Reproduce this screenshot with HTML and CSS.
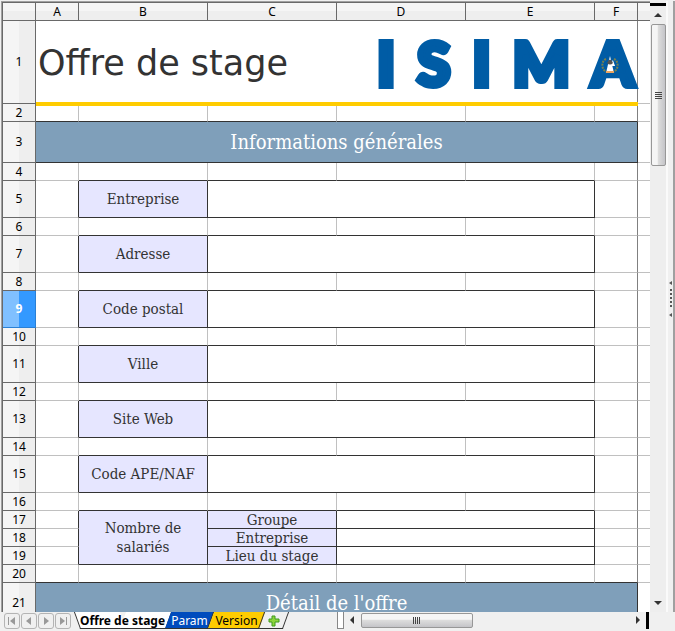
FILE: index.html
```html
<!DOCTYPE html>
<html lang="fr">
<head>
  <meta charset="UTF-8">
  <title>Offre de stage</title>
  <link rel="stylesheet" href="styles.css">
</head>
<body>

  <div class="workspace">
    <main class="sheet">
      <table>
        <colgroup>
          <col class="col-head">
          <col class="col-small">
          <col><col><col><col>
          <col class="col-small">
          <col class="col-rest">
        </colgroup>
        <thead>
          <tr>
            <th></th><th>A</th><th>B</th><th>C</th><th>D</th><th>E</th><th>F</th><th class="rest"></th>
          </tr>
        </thead>
        <tbody>
          <tr class="banner">
            <th>1</th>
            <td colspan="6" class="last">
              <div class="banner-content">
                <h1>Offre de stage</h1>
                <div class="logo">
                  <span>I</span><span>S</span><span>I</span><span>M</span><span>A</span>
                  <svg class="emblem" width="18" height="20" viewBox="0 0 18 20">
                    <path d="M9 1 L13 18 H5 Z" fill="#fff"/>
                    <path d="M5 4 C0 6 0 15 6 17 M13 4 C18 6 18 15 12 17" fill="none" stroke="#77804f" stroke-width="2" stroke-dasharray="2 1"/>
                    <path d="M6 8 Q9 1 12 8 Q9 11 6 8" fill="#555"/>
                    <path d="M5 17 H13" stroke="#eda560" stroke-width="2"/>
                  </svg>
                </div>
              </div>
            </td>
            <td></td>
          </tr>
          <tr class="before-section"><th>2</th><td></td><td></td><td></td><td></td><td></td><td class="last"></td><td></td></tr>
          <tr class="section"><th>3</th><td colspan="6" class="title">Informations générales</td><td></td></tr>
          <tr class="before-field"><th>4</th><td></td><td></td><td></td><td></td><td></td><td class="last"></td><td></td></tr>
          <tr class="field">
            <th>5</th><td class="edge"></td>
            <td class="name"><label for="entreprise">Entreprise</label></td>
            <td colspan="3" class="value"><input type="text" id="entreprise"></td>
            <td class="last"></td><td></td>
          </tr>
          <tr class="before-field"><th>6</th><td></td><td></td><td></td><td></td><td></td><td class="last"></td><td></td></tr>
          <tr class="field">
            <th>7</th><td class="edge"></td>
            <td class="name"><label for="adresse">Adresse</label></td>
            <td colspan="3" class="value"><input type="text" id="adresse"></td>
            <td class="last"></td><td></td>
          </tr>
          <tr class="before-field"><th>8</th><td></td><td></td><td></td><td></td><td></td><td class="last"></td><td></td></tr>
          <tr class="field">
            <th class="selected">9</th><td class="edge"></td>
            <td class="name"><label for="codePostal">Code postal</label></td>
            <td colspan="3" class="value"><input type="text" id="codePostal"></td>
            <td class="last"></td><td></td>
          </tr>
          <tr class="before-field"><th>10</th><td></td><td></td><td></td><td></td><td></td><td class="last"></td><td></td></tr>
          <tr class="field">
            <th>11</th><td class="edge"></td>
            <td class="name"><label for="ville">Ville</label></td>
            <td colspan="3" class="value"><input type="text" id="ville"></td>
            <td class="last"></td><td></td>
          </tr>
          <tr class="before-field"><th>12</th><td></td><td></td><td></td><td></td><td></td><td class="last"></td><td></td></tr>
          <tr class="field">
            <th>13</th><td class="edge"></td>
            <td class="name"><label for="siteWeb">Site Web</label></td>
            <td colspan="3" class="value"><input type="text" id="siteWeb"></td>
            <td class="last"></td><td></td>
          </tr>
          <tr class="before-field"><th>14</th><td></td><td></td><td></td><td></td><td></td><td class="last"></td><td></td></tr>
          <tr class="field">
            <th>15</th><td class="edge"></td>
            <td class="name"><label for="codeApe">Code APE/NAF</label></td>
            <td colspan="3" class="value"><input type="text" id="codeApe"></td>
            <td class="last"></td><td></td>
          </tr>
          <tr class="before-field"><th>16</th><td></td><td></td><td></td><td></td><td></td><td class="last"></td><td></td></tr>
          <tr>
            <th>17</th><td class="edge"></td>
            <td rowspan="3" class="name">Nombre de<br>salariés</td>
            <td class="name"><label for="nbGroupe">Groupe</label></td>
            <td colspan="2" class="value"><input type="text" id="nbGroupe"></td>
            <td class="last"></td><td></td>
          </tr>
          <tr>
            <th>18</th><td class="edge"></td>
            <td class="name"><label for="nbEntreprise">Entreprise</label></td>
            <td colspan="2" class="value"><input type="text" id="nbEntreprise"></td>
            <td class="last"></td><td></td>
          </tr>
          <tr>
            <th>19</th><td class="edge"></td>
            <td class="name"><label for="nbLieu">Lieu du stage</label></td>
            <td colspan="2" class="value"><input type="text" id="nbLieu"></td>
            <td class="last"></td><td></td>
          </tr>
          <tr class="before-section"><th>20</th><td></td><td></td><td></td><td></td><td></td><td class="last"></td><td></td></tr>
          <tr class="section"><th>21</th><td colspan="6" class="title">Détail de l'offre</td><td></td></tr>
        </tbody>
      </table>
    </main>

    <div class="vscroll">
      <button type="button" class="arrow" aria-label="Haut"><svg width="8" height="4"><path d="M0 4 L4 0 L8 4Z"/></svg></button>
      <div class="thumb"><i></i><i></i><i></i><i></i></div>
      <button type="button" class="arrow down" aria-label="Bas"><svg width="8" height="4"><path d="M0 0 L4 4 L8 0Z"/></svg></button>
    </div>

    <div class="side-handle">
      <svg width="4" height="36">
        <path d="M3 0 V4 L0 2Z M3 32 V36 L0 34Z M1 8h2v2h-2z M1 12h2v2h-2z M1 16h2v2h-2z M1 20h2v2h-2z M1 24h2v2h-2z"/>
      </svg>
    </div>
  </div>

  <footer class="bottom">
    <nav class="tabs">
      <div class="nav-buttons">
        <button type="button" aria-label="Première"><svg width="8" height="8"><path d="M0 0h1v8H0z M7 0v8L2 4z"/></svg></button>
        <button type="button" aria-label="Précédente"><svg width="8" height="8"><path d="M6 0v8L1 4z"/></svg></button>
        <button type="button" aria-label="Suivante"><svg width="8" height="8"><path d="M2 0v8l5-4z"/></svg></button>
        <button type="button" aria-label="Dernière"><svg width="8" height="8"><path d="M7 0h1v8H7z M1 0v8l5-4z"/></svg></button>
      </div>
      <button type="button" class="tab active"><span>Offre de stage</span></button>
      <button type="button" class="tab param"><span>Param</span></button>
      <button type="button" class="tab version"><span>Version</span></button>
      <button type="button" class="tab add" aria-label="Ajouter">
        <svg width="12" height="12"><path d="M4 1h3v3h4v3h-4v4h-3v-4h-3v-3h3z" fill="#8cd43c" stroke="#3c9a1c"/></svg>
      </button>
    </nav>
    <div class="split"></div>
    <div class="hscroll">
      <button type="button" class="arrow" aria-label="Gauche"><svg width="4" height="8"><path d="M4 0 L0 4 L4 8Z"/></svg></button>
      <div class="thumb"><i></i><i></i><i></i><i></i></div>
      <button type="button" class="arrow right" aria-label="Droite"><svg width="4" height="8"><path d="M0 0 L4 4 L0 8Z"/></svg></button>
    </div>
  </footer>

</body>
</html>
```
FILE: styles.css
```css
* {
  box-sizing: border-box;
}

body {
  display: flex;
  flex-direction: column;
  height: 100vh;
  margin: 0;
  overflow: hidden;
  background-color: #f0f0f0;
  font-family: "Noto Sans", "Open Sans", sans-serif;
  font-size: 12px;
  color: #000;
}

button {
  padding: 0;
  border: none;
  background: none;
  font: inherit;
  color: inherit;
}

svg {
  display: block;
}

.workspace {
  flex: 1;
  display: flex;
  min-height: 0;
  border-top: 1px solid #f0f0f0;
}

/* spreadsheet */

.sheet {
  flex: 1;
  min-width: 0;
  margin-left: 1px;
  overflow: hidden;
  background-color: #fff;
  border-top: 1px solid #a0a0a0;
  border-left: 1px solid #a0a0a0;
}

table {
  width: 100%;
  table-layout: fixed;
  border-collapse: separate;
  border-spacing: 0;
  border-top: 1px solid #696969;
  border-left: 1px solid #696969;
}

.col-head {
  width: 33px;
}

.col-small {
  width: 43px;
}

.col-rest {
  width: 12px;
}

tr {
  height: 18px;
}

th,
td {
  padding: 0;
  border-right: 1px solid #c0c0c0;
  border-bottom: 1px solid #c0c0c0;
  line-height: 16px;
}

th {
  border-color: #696969;
  font-weight: normal;
  background: linear-gradient(to right, #f5f5f5 50%, #eee 50%);
}

thead th {
  background: linear-gradient(#f5f5f5 50%, #eee 50%);
}

th.selected {
  border-color: #2a80d5;
  background: linear-gradient(to right, #80c0ff 50%, #3399ff 50%);
  color: #fff;
  font-weight: bold;
}

td:last-child,
th.rest {
  border-right: none;
}

td.last {
  border-right-color: #808080;
}

.banner {
  height: 83px;
}

.banner .last {
  position: relative;
  border-bottom: none;
}

.banner .last::after {
  content: "";
  position: absolute;
  left: 0;
  right: -1px;
  bottom: -2px;
  height: 4px;
  background-color: #ffcc00;
}

.banner-content {
  display: flex;
  justify-content: space-between;
  align-items: center;
  padding-left: 2px;
}

h1 {
  margin: 0;
  font-family: "DejaVu Sans", sans-serif;
  font-size: 35px;
  font-weight: normal;
  line-height: 48px;
  color: #333;
}

.logo {
  position: relative;
  display: flex;
  justify-content: space-between;
  width: 260px;
  padding-right: 3px;
  font-family: Lato, sans-serif;
  font-size: 60px;
  font-weight: 900;
  line-height: 80px;
  color: #005ca5;
  -webkit-text-stroke: 6px #005ca5;
}

.emblem {
  position: absolute;
  right: 18px;
  top: 32px;
}

.before-section td:not(:last-child),
.before-field td:nth-child(n+3):nth-child(-n+6) {
  border-bottom-color: #333;
}

.section {
  height: 41px;
}

td.title {
  border-color: #333;
  background-color: #7f9fba;
  font-family: "DejaVu Serif Condensed", "DejaVu Serif", serif;
  font-size: 20px;
  line-height: 18px;
  text-align: center;
  color: #fff;
}

.field {
  height: 37px;
}

td.edge {
  border-right-color: #333;
}

td.name {
  border-color: #333;
  background-color: #e6e6ff;
  font-family: "DejaVu Serif Condensed", "DejaVu Serif", serif;
  font-size: 15px;
  text-align: center;
  color: #333;
}

td[rowspan] {
  line-height: 19px;
}

td.value {
  border-color: #333;
}

.value input {
  display: block;
  width: 100%;
  height: 16px;
  padding: 0 4px;
  border: none;
  outline: none;
  background: none;
  font: inherit;
}

/* scrollbars */

.vscroll {
  display: flex;
  flex-direction: column;
  width: 16px;
  margin-top: 2px;
  border-top: 3px solid #000;
  background-color: #eee;
}

.arrow {
  display: flex;
  justify-content: center;
  align-items: center;
  height: 18px;
  fill: #333;
}

.thumb {
  display: flex;
  flex-direction: column;
  justify-content: center;
  align-items: center;
  gap: 1px;
  height: 142px;
  margin-left: 1px;
  border: 1px solid #979797;
  border-radius: 2px;
  background: linear-gradient(to right, #f5f5f5 40%, #dcdcdc 50%, #c4c4c8);
}

.thumb i {
  width: 7px;
  height: 1px;
  background-color: #444;
}

.down {
  margin-top: auto;
}

.side-handle {
  display: flex;
  justify-content: center;
  align-items: center;
  width: 9px;
  padding-bottom: 15px;
  border-left: 2px solid #fafafa;
  border-right: 2px solid #a0a0a0;
  fill: #555;
}

/* sheet tabs */

.bottom {
  display: flex;
  height: 19px;
  padding-bottom: 2px;
  padding-right: 26px;
}

.tabs {
  display: flex;
  flex: 1;
}

.nav-buttons {
  display: flex;
  gap: 1px;
  padding: 1px 6px 0 4px;
}

.nav-buttons button {
  display: flex;
  justify-content: center;
  align-items: center;
  width: 16px;
  height: 16px;
  border: 1px solid #b4b4b4;
  border-radius: 3px;
  fill: #999;
}

.tab {
  position: relative;
  height: 17px;
  line-height: 16px;
}

.tab span,
.tab svg {
  position: relative;
  z-index: 1;
}

.tab::after {
  content: "";
  position: absolute;
  inset: 0;
  border-right: 1px solid #333;
  border-bottom: 1px solid #333;
  background-color: inherit;
  transform: skewX(-20deg);
}

.active {
  width: 91px;
  font-weight: bold;
}

.active::before {
  content: "";
  position: absolute;
  inset: 0 50% 0 0;
  border-left: 1px solid #333;
  border-bottom: 1px solid #333;
  background-color: #fff;
  transform: skewX(20deg);
}

.active::after {
  left: 50%;
  background-color: #fff;
}

.param {
  width: 43px;
  color: #fff;
}

.param::after {
  background-color: #004bbd;
}

.version {
  width: 51px;
}

.version::after {
  background-color: #ffcc00;
}

.add {
  display: flex;
  justify-content: center;
  align-items: center;
  width: 24px;
}

.split {
  width: 7px;
  border: 1px solid #888;
  border-top: none;
  background-color: #fff;
}

.hscroll {
  display: flex;
  width: 47%;
  border-right: 3px solid #000;
}

.hscroll .arrow {
  width: 17px;
  height: 16px;
}

.hscroll .thumb {
  flex-direction: row;
  width: 112px;
  height: 15px;
  margin: 1px 0 0;
  background: linear-gradient(#f5f5f5 40%, #dcdcdc 50%, #c4c4c8);
}

.hscroll .thumb i {
  width: 1px;
  height: 7px;
}

.hscroll .right {
  margin-left: auto;
}
```
